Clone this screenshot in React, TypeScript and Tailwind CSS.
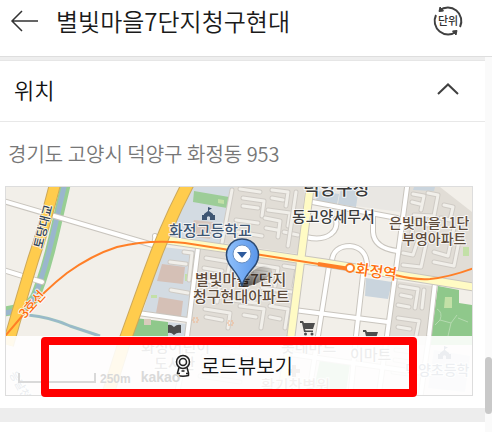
import React from 'react'

const casing = '#c9c5be'

const whiteRoads = [
  'M0 200 L153 245 Q156 240 155 236',
  'M0 269 L42 282',
  'M138 313 L188 320',
  'M198 248 L186 345 L176 400',
  'M408 180 L387 336 L378 400',
  'M435 283 L429 336 L420 400',
  'M363 275 L356 336 L350 400',
  'M329 266 L318 336 L308 400',
  'M332 262 C332 251 340 246 350 246 C361 247 367 254 367 266',
  'M294 310 L388 322',
  'M307 201 L397 218',
  'M373 214 L373 232 Q374 248 397 251',
  'M306 237 Q322 241 331 234 Q338 229 336 219',
  'M290 354 L430 374',
]

const alleys = [
  'M243 198 L264 201 L262 216 M243 206 L258 208 M236 220 L258 223 M238 232 L262 236',
  'M272 190 L288 192 L286 206 M272 198 L283 200 M268 210 L290 213 L288 226',
  'M265 218 L280 221 L278 237 M266 228 L277 230 M240 189 L260 192 M284 232 L298 235',
  'M232 190 L222 243 M296 192 L288 246',
  'M206 258 L230 262 L228 272 M204 268 L222 271 M201 280 L220 283 L217 302',
  'M252 264 L278 268 L275 286 M255 272 L270 274 M262 288 L292 292 M284 266 L297 268 L294 286',
  'M205 309 L230 313 L228 328 M206 317 L222 320 M240 306 L264 309 L261 328 M244 315 L256 317',
  'M270 306 L288 309 L285 328 M270 317 L280 319 M232 300 L256 303',
  'M413 194 L424 196 L421 210 M412 202 L420 204 M428 193 L438 195 L434 216 L414 215',
  'M444 205 L453 207 L450 220 L441 218 M405 225 L413 227 L411 238 M416 222 L428 225',
  'M403 253 L413 255 L418 240 M403 265 L421 267 L426 244 M434 252 L448 256 L454 228 M434 262 L454 266 L460 236',
  'M400 286 L418 289 L415 308 M401 295 L411 297 M424 290 L422 308 M398 305 L409 307',
  'M398 318 L419 321 L416 336 M398 327 L410 329',
  'M184 252 L192 253 L189 280 M170 262 L186 264 M171 290 L188 293',
  'M398 340 L415 342 M396 350 L412 352 M395 360 L410 362 M393 372 L409 374',
  'M205 342 L238 346 M203 356 L226 360 M232 356 L262 361 M200 376 L240 382',
]

const Road: React.FC<{ d: string; color: string; width: number; edge?: string }> = ({ d, color, width, edge = casing }) => (
  <>
    <path d={d} stroke={edge} strokeWidth={width + 2} />
    <path d={d} stroke={color} strokeWidth={width} />
  </>
)

const Cart: React.FC<{ x: number; y: number }> = ({ x, y }) => (
  <g transform={`translate(${x} ${y})`} fill="#4d4d4d" stroke="none">
    <path d="M0 0 H3 L4 2 H15 L13 8 H5 L5.500 9.500 H13 V11 H4 L2 2 H0Z" />
    <circle cx="5.500" cy="13" r="1.500" />
    <circle cx="12" cy="13" r="1.500" />
  </g>
)

const School: React.FC<{ x: number; y: number }> = ({ x, y }) => (
  <path
    transform={`translate(${x} ${y})`}
    fill="#3e5673"
    stroke="none"
    d="M6 0 L10 1.500 L7 3 V4 L11 7 V8 H13 V13 H8 V10 Q6.500 8.500 5 10 V13 H0 V8 H2 V7 L6 4Z"
  />
)

const MapView: React.FC = () => {
  return (
    <svg viewBox="6 187 466 208" preserveAspectRatio="xMidYMid slice" className="block w-full h-[208px]" fill="none" role="img" aria-label="지도">
      <defs>
        <linearGradient id="pin" x1="0" y1="0" x2="1" y2="0">
          <stop offset="0" stopColor="#8fc0fb" />
          <stop offset="1" stopColor="#5a96ea" />
        </linearGradient>
        <linearGradient id="shadow" x1="0" y1="1" x2="1" y2="0">
          <stop offset="0" stopColor="#000" stopOpacity="0.7" />
          <stop offset="1" stopColor="#000" stopOpacity="0" />
        </linearGradient>
      </defs>
      <rect x="6" y="187" width="466" height="208" fill="#f2efe9" />
      <g strokeWidth="0">
        <path d="M234 187 H305 L298 254 L222 243Z" fill="#e1ddd6" />
        <path d="M199 249 L298 263 L288 345 L188 336Z" fill="#e1ddd6" />
        <path d="M190 187 H234 L224 244 L168 238Z" fill="#d3dbe2" />
        <path d="M194 220 L213 222 L210 239 L189 236Z" fill="#d5c5bd" />
        <path d="M194 191 L229 197 L227 208 L193 202Z" fill="#9dcd98" />
        <path d="M163 247 L197 251 L189 318 L143 311Z" fill="#d3dbe2" />
        <path d="M162 264 L185 267 L183 284 L157 281Z" fill="#d5c0b6" />
        <path d="M159 297 L183 301 L181 317 L156 313Z" fill="#d5c0b6" />
        <path d="M135 318 L168 322 V345 H125Z" fill="#8fc88b" />
        <path d="M168 322 L188 324 L185 345 H168Z" fill="#d3dbe2" />
        <path d="M315 187 H405 L400 212 L312 200Z" fill="#e9e7e3" />
        <path d="M341 187 H359 L356 207 L338 204Z" fill="#c9d4dd" />
        <path d="M318 191 L339 194 L337 204 L316 201Z" fill="#c9d4dd" />
        <path d="M366 278 L392 282 L388 299 L365 296Z" fill="#c9d4dd" />
        <path d="M409 187 H440 L472 212 V285 L397 272Z" fill="#e1ddd6" />
        <path d="M414 187 H435 L434 191 L413 190Z" fill="#c9d4dd" />
        <path d="M397 281 L433 286 L426 345 H388Z" fill="#e1ddd6" />
        <path d="M438 286 L459 290 V303 L472 305 V345 H430Z" fill="#8fc88b" />
        <path d="M320 360 L350 364 L346 392 L314 388Z" fill="#9dcd98" />
        <path d="M434 350 L470 356 L465 392 L428 388Z" fill="#d3dbe2" />
      </g>
      <path d="M437 309 Q443 312 440 320 L451 323 L448 336 M451 323 L457 315 M440 320 L435 325 M458 318 L468 322" stroke="#b5dab0" />
      <g fill="#c3e0a7">
        <path d="M445 297 h7 v11 h-8z M463 247 h6 v9 h-6z M185 274 h4 v7 h-4z M151 295 h6 v3 h-6z M218 199 l6 1 v4 l-6 -1z" />
      </g>
      <g strokeLinejoin="round" strokeLinecap="round">
        {alleys.map((d) => (
          <Road key={d} d={d} color="#f1efea" width={3} edge="#cfcbc5" />
        ))}
      </g>

      <path d="M66 183 L54 235 Q46 270 36 295 Q31 309 0 312" stroke="#97ce93" strokeWidth="10" />
      <path d="M65 183 L53 235 Q45 270 35 296 Q31 309 0 314" stroke="#9ab6cd" strokeWidth="5" />
      <path d="M28 315 Q50 317 70 326 L100 336" stroke="#9ac4bd" strokeWidth="3" />
      <path d="M28 315 Q50 317 70 326 L100 336" stroke="#9ab6cd" strokeWidth="1.500" />

      <g strokeLinejoin="round" strokeLinecap="round">
        {whiteRoads.map((d) => (
          <path key={d} d={d} stroke={casing} strokeWidth="6" />
        ))}
        {whiteRoads.map((d) => (
          <path key={d} d={d} stroke="#fff" strokeWidth="4" />
        ))}
      </g>

      <path d="M160 239 L325 263 L480 288" stroke={casing} strokeWidth="9" />
      <path d="M311 180 L302 250 L291 336 L280 400" stroke={casing} strokeWidth="9" />
      <path d="M160 239 L325 263 L480 288" stroke="#fffbc4" strokeWidth="7" />
      <path d="M311 180 L302 250 L291 336 L280 400" stroke="#fffbc4" strokeWidth="7" />
      <Road d="M56 180 Q45 225 33 260 Q22 296 8 345" color="#ffcc4d" width={10} edge="#cda95b" />
      <Road d="M190 180 Q166 225 148 276 L125 340 L106 400" color="#ffcc4d" width={11} edge="#cda95b" />

      <g stroke="#ff7f27" strokeWidth="2">
        <path d="M0 342 L23 315 Q45 290 67 273 Q92 255 117 247 Q150 239 185 243 L325 265" />
        <path d="M395 275 Q414 280 430 279 Q450 277 474 268" />
      </g>
      <path d="M318 264 L350 269" stroke="#ff7f27" strokeWidth="4" />
      <circle cx="350" cy="268" r="4" fill="#fff" stroke="#ff7f27" strokeWidth="2" />

      <path d="M193 318 h5 v4 h-5z M228 321 h5 v4 h-5z" stroke="#f0b48c" strokeDasharray="2 1" />
      <path d="M144 319 h7 v6 h-7z" fill="#d9cbbd" />
      <path d="M168 325 Q171 324 174 327 Q177 324 181 325 V333 Q177 332 174 335 Q171 332 168 333Z" fill="#4d4d4d" />
      <School x={202} y={207} />
      <School x={438} y={346} />
      <Cart x={300} y={321} />
      <Cart x={363} y={330} />
      <path d="M292 365 h4 v4 h4 v4 h-4 v4 h-4 v-4 h-4 v-4 h4z" fill="#8c7060" />

      <g
        className="font-medium"
        fontFamily="'Noto Sans CJK KR', sans-serif"
        fontSize="15"
        stroke="#fff"
        strokeOpacity="0.8"
        strokeWidth="2"
        strokeLinejoin="round"
        paintOrder="stroke"
      >
        <text x="169" y="236" fill="#3e5673">화정고등학교</text>
        <text x="303" y="195" fontSize="18" fill="#3b3b3b">덕양구청</text>
        <text x="292" y="222" fill="#3b3b3b">동고양세무서</text>
        <text x="389" y="228" fontSize="14" fill="#5e4c3c">은빛마을11단</text>
        <text x="402" y="244" fontSize="14" fill="#5e4c3c">부영아파트</text>
        <text x="195" y="285" fill="#5e4c3c">별빛마을7단지</text>
        <text x="193" y="302" fill="#5e4c3c">청구현대아파트</text>
        <text x="141" y="352" fill="#4d4d4d">화정어린이</text>
        <text x="154" y="369" fill="#4d4d4d">도서관</text>
        <text x="281" y="352" fill="#4d4d4d">롯데마트</text>
        <text x="350" y="360" fill="#4d4d4d">이마트</text>
        <text x="261" y="391" fill="#8c7060">활기찬병원</text>
        <text x="405" y="375" fontSize="14" fill="#3e5673">덕양초등학</text>
        <text transform="translate(355 274) rotate(8)" fill="#ff6d0a">화정역</text>
        <text transform="translate(42 249) rotate(-76)" fontSize="12" fill="#2f435c">토당대교</text>
        <text transform="translate(25 319) rotate(-48)" fontSize="13" fill="#ff6d0a">3호선</text>
        <text transform="translate(9 374) rotate(60)" fontSize="11" fill="#3e5673">응달천</text>
      </g>

      {/* marker */}
      <path d="M242 287 Q250 268 264 266 Q278 268 268 277 Q258 285 242 287Z" fill="url(#shadow)" />
      <path
        d="M242 286 C240 276 233 270 229 264 C222 251 231 239 242 239 C254 239 263 251 256 264 C252 270 244 276 242 286Z"
        fill="url(#pin)"
        stroke="#2c4a72"
        strokeWidth="1.500"
        strokeLinejoin="round"
      />
      <circle cx="242" cy="254" r="9" fill="#fff" stroke="#6a8fc0" />
      <path d="M237 252 h10 l-5 6z" fill="#2d5a9c" />
    </svg>
  )
}

const UnitIcon: React.FC = () => (
  <svg viewBox="0 0 32 32" className="w-8 h-8" fill="none" stroke="#404040" strokeWidth="2">
    <path d="M7.500 5.500 A13.500 13.500 0 0 1 28 22" />
    <path d="M24.500 26.500 A13.500 13.500 0 0 1 4 10" />
    <path d="M8 2 L7 6.500 L11.500 6Z" fill="#404040" strokeWidth="1" />
    <path d="M24 30 L25 25.500 L20.500 26Z" fill="#404040" strokeWidth="1" />
    <text x="16" y="20" fontSize="11" textAnchor="middle" fill="#333" stroke="none" fontFamily="'Noto Sans CJK KR', sans-serif" className="font-medium">
      단위
    </text>
  </svg>
)

const RoadviewIcon: React.FC = () => (
  <svg viewBox="0 0 16 24" className="w-4 h-6" fill="none" stroke="#222" strokeWidth="1.500" strokeLinejoin="round">
    <circle cx="8" cy="8" r="6.500" />
    <circle cx="8" cy="8" r="3.500" />
    <path d="M4 13.500 L2.500 19 V21.500 Q8 23 13.500 21.500 V19 L12 13.500" />
    <path d="M2.500 19.500 H5 M11 19.500 H13.500 M6.500 17 H9.500" />
  </svg>
)

const App: React.FC = () => {
  return (
    <div className="min-h-screen flex flex-col bg-white font-['Noto_Sans_CJK_KR',sans-serif]">
      <header className="h-[57px] pb-3.5 pl-2.5 pr-7 flex items-center border-b border-[#dedede]">
        <button type="button" aria-label="뒤로">
          <svg viewBox="0 0 28 22" className="w-7 h-[22px]" fill="none" stroke="#333" strokeWidth="1.500">
            <path d="M28 11 H2 M12 1 L2 11 L12 21" />
          </svg>
        </button>
        <h1 className="ml-[18px] flex-1 text-[24px] leading-8 font-[350] text-[#1a1a1a]">별빛마을7단지청구현대</h1>
        <button type="button" aria-label="단위">
          <UnitIcon />
        </button>
      </header>
      <div className="flex flex-1">
        <main className="flex-1 min-w-0">
          <div className="h-1 bg-[#eee] border-b border-[#e6e6e6]"></div>
          <section>
            <div className="h-[61px] pb-1 pl-[14px] pr-[26px] flex items-center justify-between border-b border-[#e8e8e8]">
              <h2 className="text-[22px] leading-8 font-[350] text-[#111]">위치</h2>
              <button type="button" aria-label="접기">
                <svg viewBox="0 0 22 12" className="w-[22px] h-3" fill="none" stroke="#404040" strokeWidth="2">
                  <path d="M1 11 L11 1.500 L21 11" />
                </svg>
              </button>
            </div>
            <div className="pl-[5px] pr-3 pb-3">
              <p className="h-16 pl-[3px] flex items-center text-[20px] font-[350] text-[#777]">경기도 고양시 덕양구 화정동 953</p>
              <div className="relative border border-[#ddd]">
                <MapView />
                <div className="absolute inset-x-0 bottom-0 h-[59px]">
                  <button type="button" className="w-full h-full pr-[10px] flex items-center justify-center gap-2.5 bg-white/90 text-[20px] font-[350] text-[#111]">
                    <RoadviewIcon />
                    로드뷰보기
                  </button>
                  <div className="absolute left-3 bottom-2 flex items-end gap-1 text-xs font-bold leading-4 text-[#d9d9d9] font-['Liberation_Sans',sans-serif]">
                    <span className="w-[78px] h-2.5 mb-1 border-2 border-t-0 border-[#d9d9d9]"></span>
                    250m
                    <span className="ml-1.5 text-sm">kakao</span>
                  </div>
                </div>
                <div className="absolute left-[35px] right-[55px] -bottom-0.5 h-[60px] rounded border-8 border-[#f00]"></div>
              </div>
            </div>
          </section>
          <div className="h-[14px] bg-[#ededed]"></div>
        </main>
        <div className="w-[7px] bg-[#fafafa]">
          <div className="mt-[300px] h-[57px] rounded-full bg-[#c9c9c9]"></div>
        </div>
      </div>
    </div>
  )
}

export default App
